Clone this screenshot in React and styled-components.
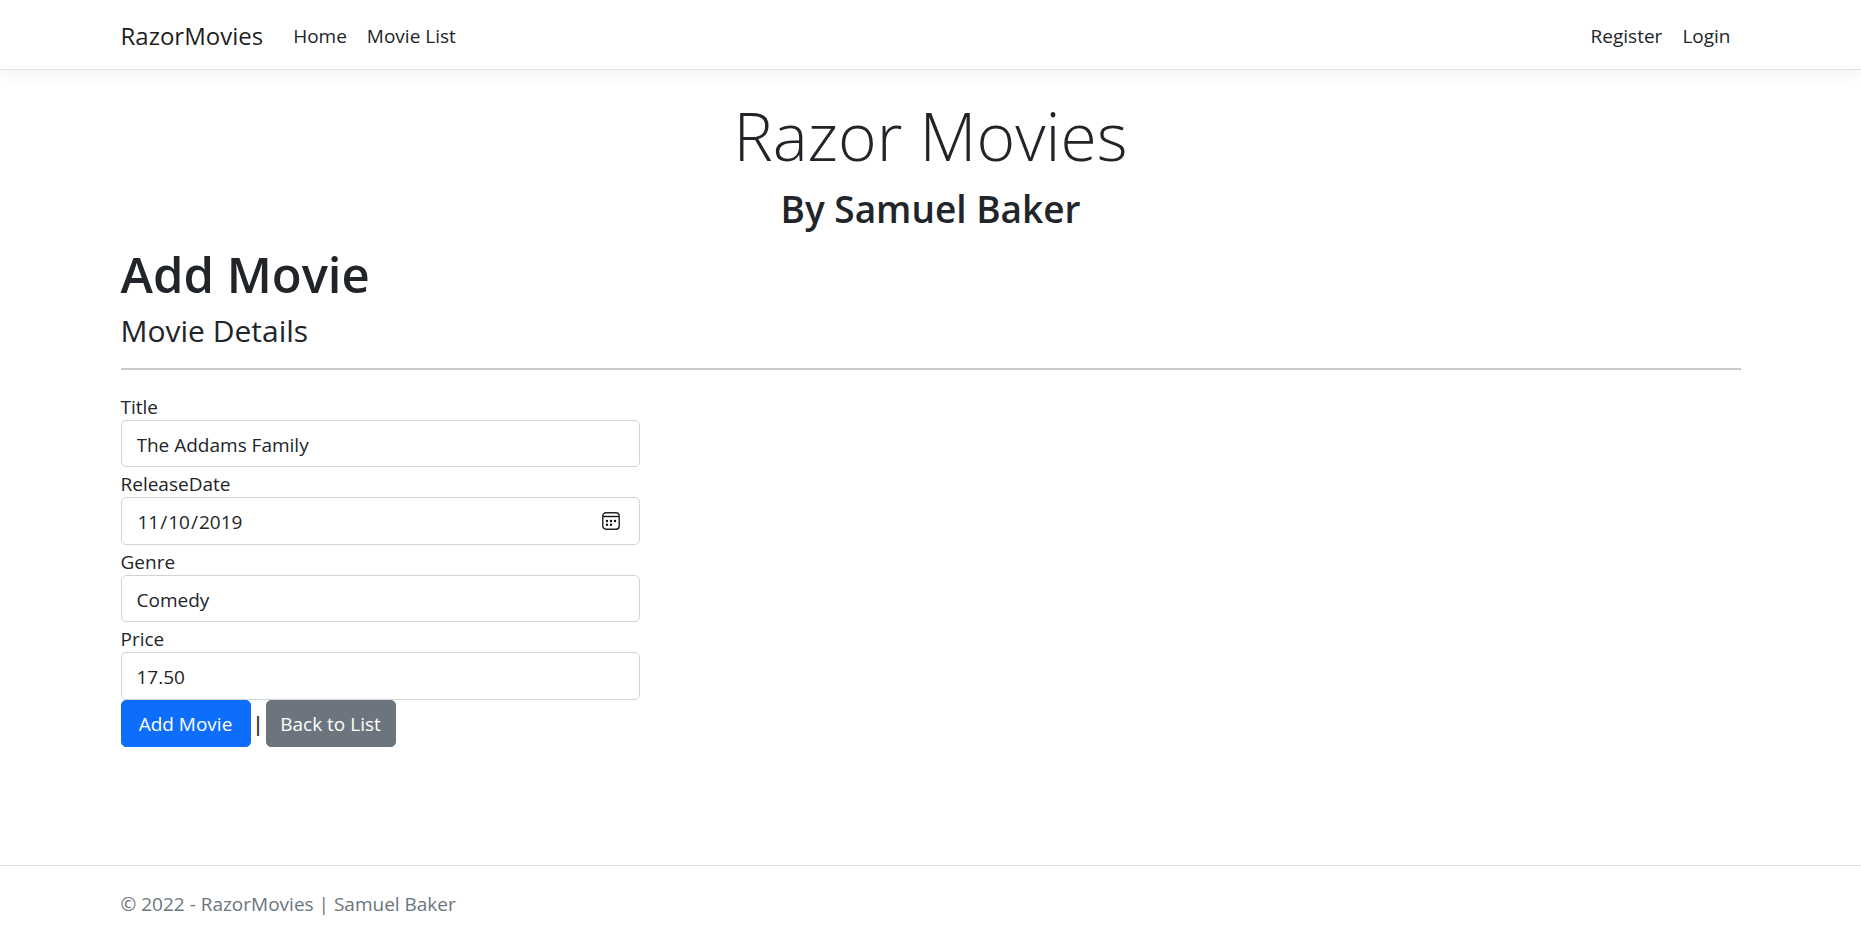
import React from "react";
import styled, { createGlobalStyle } from "styled-components";

const GlobalStyle = createGlobalStyle`
  *, *::before, *::after { box-sizing: border-box; }
  body {
    margin: 0;
    background: #fff;
    color: #212529;
    font-family: "Segoe UI", "Open Sans", "Noto Sans", sans-serif;
    font-size: 19px;
    line-height: 30px;
  }
`;

const Page = styled.div`
  display: flex;
  flex-direction: column;
  min-height: 100vh;
`;

const Container = styled.div`
  width: 100%;
  max-width: 1650px;
  margin: 0 auto;
  padding: 0 15px;
`;

const Header = styled.header`
  border-bottom: 1px solid #dee2e6;
  box-shadow: 0 5px 15px rgba(0, 0, 0, 0.05);
`;

const Nav = styled(Container).attrs({ as: "nav" })`
  display: flex;
  align-items: center;
  min-height: 69px;
  padding-top: 2px;
`;

const Brand = styled.a`
  margin-right: 20px;
  color: rgba(0, 0, 0, 0.9);
  font-size: 24px;
  text-decoration: none;
`;

const NavList = styled.ul`
  display: flex;
  margin: 0;
  padding: 0;
  list-style: none;

  &:last-child { margin-left: auto; }
`;

const NavLink = styled.a`
  display: block;
  padding: 10px;
  color: #212529;
  text-decoration: none;
`;

const Main = styled(Container).attrs({ as: "main" })`
  flex: 1;
  padding-top: 20px;
  padding-bottom: 20px;
`;

const Hero = styled.div`
  text-align: center;
`;

const Display = styled.h1`
  margin: 0 0 10px;
  padding-top: 6px;
  font-size: 66px;
  font-weight: 300;
  line-height: 78px;
`;

const Byline = styled.h2`
  margin: 0 0 10px;
  padding-top: 2px;
  font-size: 37px;
  font-weight: 600;
  line-height: 46px;
`;

const PageTitle = styled.h1`
  margin: 0 0 10px;
  padding-top: 4px;
  font-size: 49px;
  font-weight: 600;
  line-height: 56px;
`;

const SectionTitle = styled.h4`
  margin: 0;
  padding-top: 2px;
  font-size: 30px;
  font-weight: 500;
  line-height: 34px;
`;

const Rule = styled.hr`
  height: 2px;
  margin: 20px 0;
  border: 0;
  background: #c8c9ca;
`;

const Form = styled.form`
  width: calc((100% + 30px) / 3 - 30px);
  min-width: 300px;
`;

const Field = styled.div`
  display: flex;
  flex-direction: column;
  position: relative;
`;

const Label = styled.label`
  padding-top: 4px;
  line-height: 26px;
`;

const Input = styled.input`
  width: 100%;
  height: ${(p) => (p.$tall ? 48 : 47)}px;
  margin: 0;
  padding: 9px 15px 7px;
  border: 1px solid #ced4da;
  border-radius: 5px;
  background: #fff;
  color: #212529;
  font: inherit;

  &::-webkit-calendar-picker-indicator { opacity: 0; }
`;

const CalendarIcon = styled.svg`
  position: absolute;
  right: 20px;
  bottom: 15px;
  width: 18px;
  height: 18px;
  pointer-events: none;
`;

const Actions = styled.div`
  display: flex;
  align-items: center;
`;

const Separator = styled.span`
  width: 15px;
  font-weight: 600;
  text-align: center;
`;

const buttonLook = (p) => `
  width: 130px;
  height: 47px;
  padding: 8px 0;
  border: 1px solid ${p.$color};
  border-radius: 5px;
  background: ${p.$color};
  color: #fff;
  font: inherit;
  text-align: center;
  text-decoration: none;
  white-space: nowrap;
  cursor: pointer;
`;

const Button = styled.button`${buttonLook}`;
const ButtonLink = styled.a`${buttonLook}`;

const Footer = styled.footer`
  padding-top: 3px;
  border-top: 1px solid #dee2e6;
  color: #6c757d;
  line-height: 70px;
`;

const fields = [
  { id: "Title", type: "text", value: "The Addams Family" },
  { id: "ReleaseDate", type: "date", value: "2019-11-10", tall: true },
  { id: "Genre", type: "text", value: "Comedy" },
  { id: "Price", type: "text", value: "17.50", tall: true },
];

function Calendar() {
  return (
    <CalendarIcon viewBox="0 0 18 18" aria-hidden="true">
      <rect x="0.8" y="0.8" width="16.4" height="16.4" rx="3.2" fill="none" stroke="#222" strokeWidth="1.4" />
      <path d="M1 4.5H17" stroke="#111" strokeWidth="1.4" />
      <g fill="#111">
        <circle cx="5" cy="9" r="1.2" />
        <circle cx="9" cy="9" r="1.2" />
        <circle cx="13" cy="9" r="1.2" />
        <circle cx="5" cy="12.8" r="1.2" />
        <circle cx="9" cy="12.8" r="1.2" />
      </g>
    </CalendarIcon>
  );
}

export default function App() {
  return (
    <Page>
      <GlobalStyle />
      <Header>
        <Nav>
          <Brand href="#">RazorMovies</Brand>
          <NavList>
            <li><NavLink href="#">Home</NavLink></li>
            <li><NavLink href="#">Movie List</NavLink></li>
          </NavList>
          <NavList>
            <li><NavLink href="#">Register</NavLink></li>
            <li><NavLink href="#">Login</NavLink></li>
          </NavList>
        </Nav>
      </Header>
      <Main>
        <Hero>
          <Display>Razor Movies</Display>
          <Byline>By Samuel Baker</Byline>
        </Hero>
        <PageTitle>Add Movie</PageTitle>
        <SectionTitle>Movie Details</SectionTitle>
        <Rule />
        <Form onSubmit={(e) => e.preventDefault()}>
          {fields.map((f) => (
            <Field key={f.id}>
              <Label htmlFor={f.id}>{f.id}</Label>
              <Input id={f.id} type={f.type} defaultValue={f.value} $tall={f.tall} />
              {f.type === "date" && <Calendar />}
            </Field>
          ))}
          <Actions>
            <Button type="submit" $color="#0d6efd">Add Movie</Button>
            <Separator>|</Separator>
            <ButtonLink href="#" $color="#6c757d">Back to List</ButtonLink>
          </Actions>
        </Form>
      </Main>
      <Footer>
        <Container>© 2022 - RazorMovies | Samuel Baker</Container>
      </Footer>
    </Page>
  );
}
